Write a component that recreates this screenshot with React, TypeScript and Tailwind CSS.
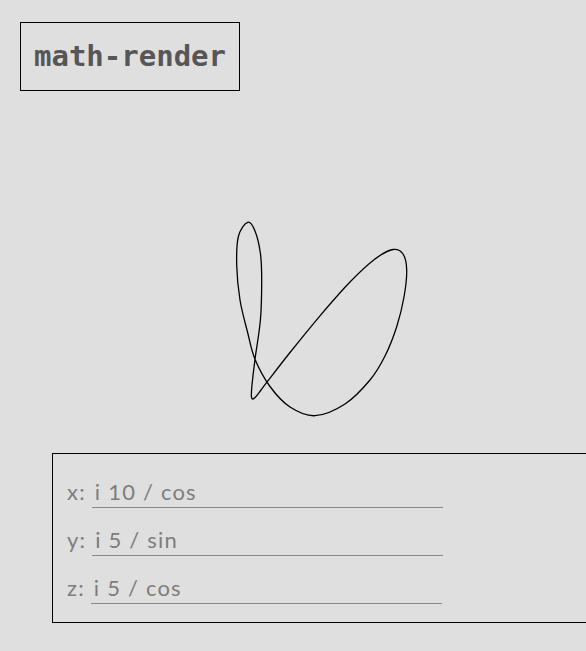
import React from 'react'

// traced curve of the rendered parametric figure, in page coordinates
const CURVE: [number, number][] = [
  [251.4, 396.5], [252.8, 399], [256, 396.5], [261, 390], [267.3, 381.7], [290, 352.5],
  [320, 315.8], [350, 282], [375, 259], [393, 249.5], [403, 254], [406.7, 270],
  [404, 297], [396.7, 326.7], [385, 356], [370, 380], [345, 404], [315, 415.7],
  [290, 407], [270, 386.5], [255, 359.3], [247.5, 332], [240, 300], [236.7, 265],
  [238.5, 236], [247.7, 222.3], [255, 231], [260.5, 254], [261.7, 282], [260.4, 320],
  [255, 359.3], [252, 385],
]

function smoothPath(pts: [number, number][]) {
  const n = pts.length
  let d = `M${pts[0][0]},${pts[0][1]}`
  for (let i = 0; i < n; i++) {
    const p0 = pts[(i - 1 + n) % n]
    const p1 = pts[i]
    const p2 = pts[(i + 1) % n]
    const p3 = pts[(i + 2) % n]
    const c1x = p1[0] + (p2[0] - p0[0]) / 6
    const c1y = p1[1] + (p2[1] - p0[1]) / 6
    const c2x = p2[0] - (p3[0] - p1[0]) / 6
    const c2y = p2[1] - (p3[1] - p1[1]) / 6
    d += ` C${c1x.toFixed(2)},${c1y.toFixed(2)} ${c2x.toFixed(2)},${c2y.toFixed(2)} ${p2[0]},${p2[1]}`
  }
  return d
}

const ROWS = [
  { label: 'x:', value: 'i 10 / cos' },
  { label: 'y:', value: 'i 5 / sin' },
  { label: 'z:', value: 'i 5 / cos' },
]

export default function App() {
  return (
    <div className="h-[651px] w-full overflow-hidden bg-[#dfdfdf]">
      <div className="pl-[20px] pt-[22px]">
        <h1 className="flex h-[69px] w-[220px] items-center justify-center border border-black font-['DejaVu_Sans_Mono',monospace] text-[29px] font-bold text-[#565656]">
          math-render
        </h1>
      </div>

      <svg className="block h-[362px] w-full" viewBox="0 91 586 362">
        <path d={smoothPath(CURVE)} fill="none" stroke="#000" strokeWidth="1.3" strokeLinejoin="round" />
      </svg>

      <div className="ml-[52px] flex w-[600px] flex-col gap-[19px] border border-black pb-[18px] pl-[14px] pt-[25px] font-['Lato',sans-serif] text-[22px] leading-none tracking-[1.2px] text-[#7d7d7d]">
        {ROWS.map(({ label, value }) => (
          <div key={label} className="flex items-baseline gap-[6px]">
            <span>{label}</span>
            <input
              readOnly
              value={value}
              className="h-[29px] w-[351px] border-b border-[#888] bg-transparent px-[3px] pb-[4px] tracking-[1.2px] text-[#7d7d7d] outline-none"
            />
          </div>
        ))}
      </div>
    </div>
  )
}
